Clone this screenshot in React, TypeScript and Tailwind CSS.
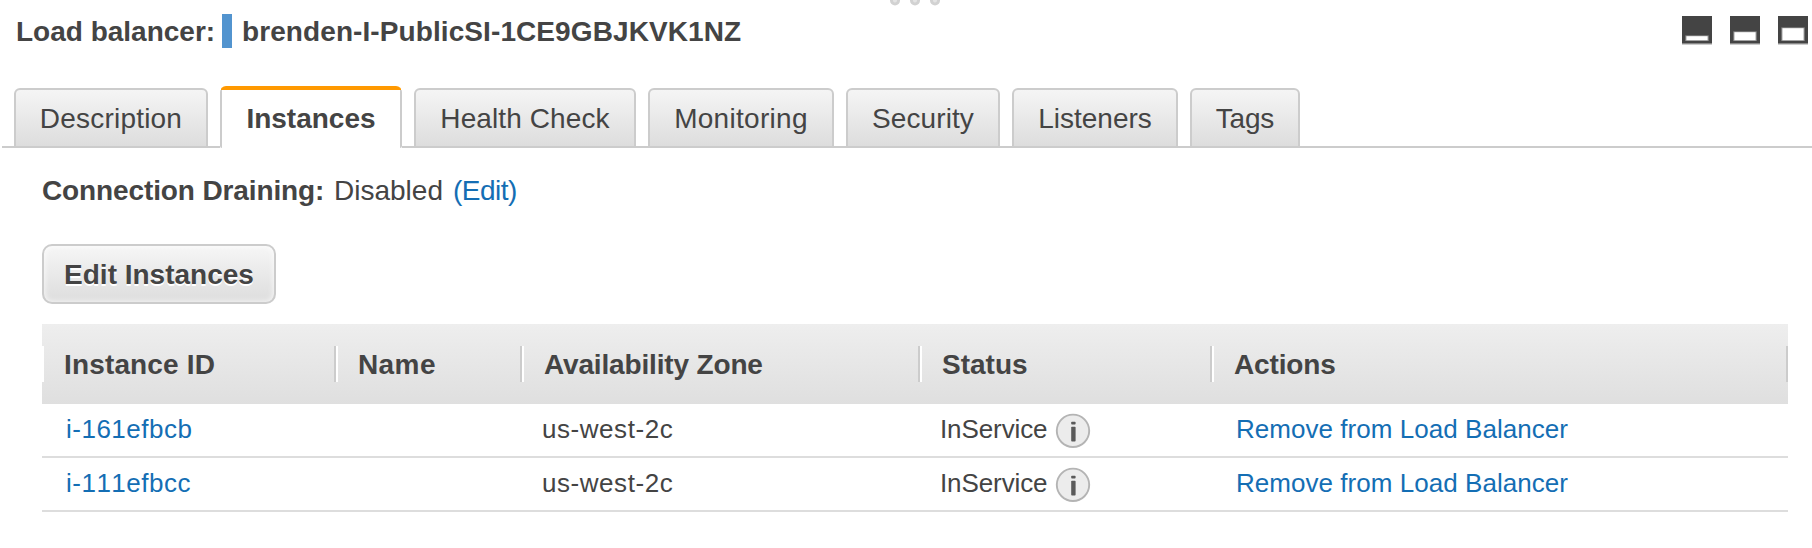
import React from "react";

const tabs = [
  { label: "Description", box: "w-[194px]", text: "tracking-[0.2px]" },
  { label: "Instances", box: "w-[182px]", text: "tracking-normal" },
  { label: "Health Check", box: "w-[222px]", text: "tracking-[0.1px]" },
  { label: "Monitoring", box: "w-[186px]", text: "tracking-[0.3px]" },
  { label: "Security", box: "w-[154px]", text: "tracking-[0.1px]" },
  { label: "Listeners", box: "w-[166px]", text: "tracking-normal" },
  { label: "Tags", box: "w-[110px]", text: "tracking-[-0.2px]" },
];

const columns = [
  { label: "Instance ID", width: "w-[294px]", text: "tracking-[0.15px]" },
  { label: "Name", width: "w-[186px]", text: "tracking-[0.4px]" },
  { label: "Availability Zone", width: "w-[398px]", text: "tracking-[-0.16px]" },
  { label: "Status", width: "w-[292px]", text: "tracking-normal" },
  { label: "Actions", width: "w-[576px]", text: "tracking-[-0.15px]" },
];

const rows = [
  { id: "i-161efbcb", zone: "us-west-2c", status: "InService" },
  { id: "i-111efbcc", zone: "us-west-2c", status: "InService" },
];

function PaneIcon({ y, h }: { y: number; h: number }) {
  return (
    <svg width="30" height="29" viewBox="0 0 30 29">
      <rect width="30" height="27" fill="#444" />
      <rect y="27" width="30" height="1" fill="#888" />
      <rect y="28" width="30" height="1" fill="#ccc" />
      <rect x="3.3" y={y - 0.8} width="23.4" height={h + 1.6} fill="#8c8c8c" />
      <rect x="4.4" y={y} width="21.2" height={h} fill="#fff" />
    </svg>
  );
}

function InfoIcon() {
  return (
    <svg width="36" height="36" viewBox="0 0 36 36">
      <circle cx="18" cy="17.8" r="16.2" fill="#ececec" stroke="#b4b4b4" strokeWidth="1.9" />
      <rect x="16.2" y="8.8" width="4.4" height="2.8" rx="0.8" fill="#5a5a5a" />
      <rect x="16.2" y="13.8" width="4.4" height="14.8" rx="0.8" fill="#5a5a5a" />
    </svg>
  );
}

export default function App() {
  return (
    <div className="flex h-[548px] w-[1812px] flex-col overflow-hidden bg-white font-['Liberation_Sans',Arial,sans-serif] text-[28px] leading-8 text-[#444]">
      <header className="relative flex h-[86px] shrink-0 items-start justify-between pt-[14px] pr-1 pl-4">
        <h1 className="flex h-[34px] font-bold whitespace-nowrap">
          <span className="w-[206px] pt-[2px]">Load balancer:</span>
          <span className="mr-[10px] h-[34px] w-[10px] bg-[#5294cf]" />
          <span className="pt-[2px] tracking-[0.09px]">brenden-I-PublicSI-1CE9GBJKVK1NZ</span>
        </h1>
        <div className="mt-[2px] flex gap-[18px]">
          <PaneIcon y={20.2} h={4} />
          <PaneIcon y={16.2} h={8} />
          <PaneIcon y={12.2} h={12} />
        </div>
        <svg className="absolute top-0 left-[888px]" width="54" height="7" viewBox="0 0 54 7">
          <g fill="#e4e4e4" stroke="#d2d2d2" strokeWidth="3">
            <path d="M3.5 -2v2.5a3.5 3.5 0 0 0 7 0V-2M23.5 -2v2.5a3.5 3.5 0 0 0 7 0V-2M43.5 -2v2.5a3.5 3.5 0 0 0 7 0V-2" />
          </g>
        </svg>
      </header>

      <nav className="flex h-[62px] shrink-0 items-end">
        <span className="ml-[2px] h-[2px] w-3 bg-[#ccc]" />
        {tabs.map((tab, i) => (
          <React.Fragment key={tab.label}>
            {tab.label === "Instances" ? (
              <div className={`${tab.box} flex h-[62px] shrink-0 flex-col overflow-hidden rounded-t-[6px]`}>
                <span className="mx-px h-1 bg-[#f90]" />
                <span className="flex flex-1 justify-center rounded-b-[2px] border-x-2 border-[#ccc] pt-[13px] font-bold">
                  <span className={tab.text}>{tab.label}</span>
                </span>
              </div>
            ) : (
              <div
                className={`${tab.box} flex h-[60px] shrink-0 justify-center rounded-t-[6px] border-2 border-[#ccc] bg-linear-to-b from-[#f5f5f5] to-[#ddd] pt-[13px] whitespace-nowrap`}
              >
                <span className={tab.text}>{tab.label}</span>
              </div>
            )}
            {i < tabs.length - 1 && <span className="h-[2px] w-3 shrink-0 bg-[#ccc]" />}
          </React.Fragment>
        ))}
        <span className="h-[2px] flex-1 bg-[#ccc]" />
      </nav>

      <main className="pt-[27px] pr-6 pl-[42px]">
        <p className="flex h-8 whitespace-nowrap">
          <b className="w-[292px] tracking-[-0.12px]">Connection Draining:</b>
          <span className="w-[119px]">Disabled</span>
          <a className="tracking-[-0.5px] text-[#146eb4]">(Edit)</a>
        </p>
        <button className="mt-[37px] flex h-[60px] w-[234px] justify-center rounded-[10px] border-2 border-[#ccc] bg-linear-to-b from-[#f6f6f6] to-[#ddd] pt-[13px] font-bold whitespace-nowrap shadow-[inset_0_0_6px_rgba(255,255,255,0.9)] [text-shadow:0_2px_0_#fff]">
          Edit Instances
        </button>

        <section className="mt-5">
          <div className="flex h-20 items-center bg-linear-to-b from-[#eee] to-[#dfdfdf]">
            {columns.map((col) => (
              <div
                key={col.label}
                className={`${col.width} ${col.text} flex h-9 shrink-0 items-center border-r-2 border-l-2 border-r-[#ccc] border-l-white pt-[2px] pl-5 font-bold whitespace-nowrap`}
              >
                {col.label}
              </div>
            ))}
          </div>
          {rows.map((row) => (
            <div key={row.id} className="flex h-[54px] border-b-2 border-[#ddd] pt-[9px] text-[26px] whitespace-nowrap">
              <a className="w-[480px] pl-6 tracking-[0.5px] text-[#146eb4] [font-kerning:none]">{row.id}</a>
              <span className="w-[398px] pl-5 tracking-[0.55px]">{row.zone}</span>
              <span className="flex w-[292px] pl-5">
                <span className="w-[115px] tracking-[-0.1px]">{row.status}</span>
                <InfoIcon />
              </span>
              <a className="pl-6 tracking-[0.04px] text-[#146eb4]">Remove from Load Balancer</a>
            </div>
          ))}
        </section>
      </main>
    </div>
  );
}
